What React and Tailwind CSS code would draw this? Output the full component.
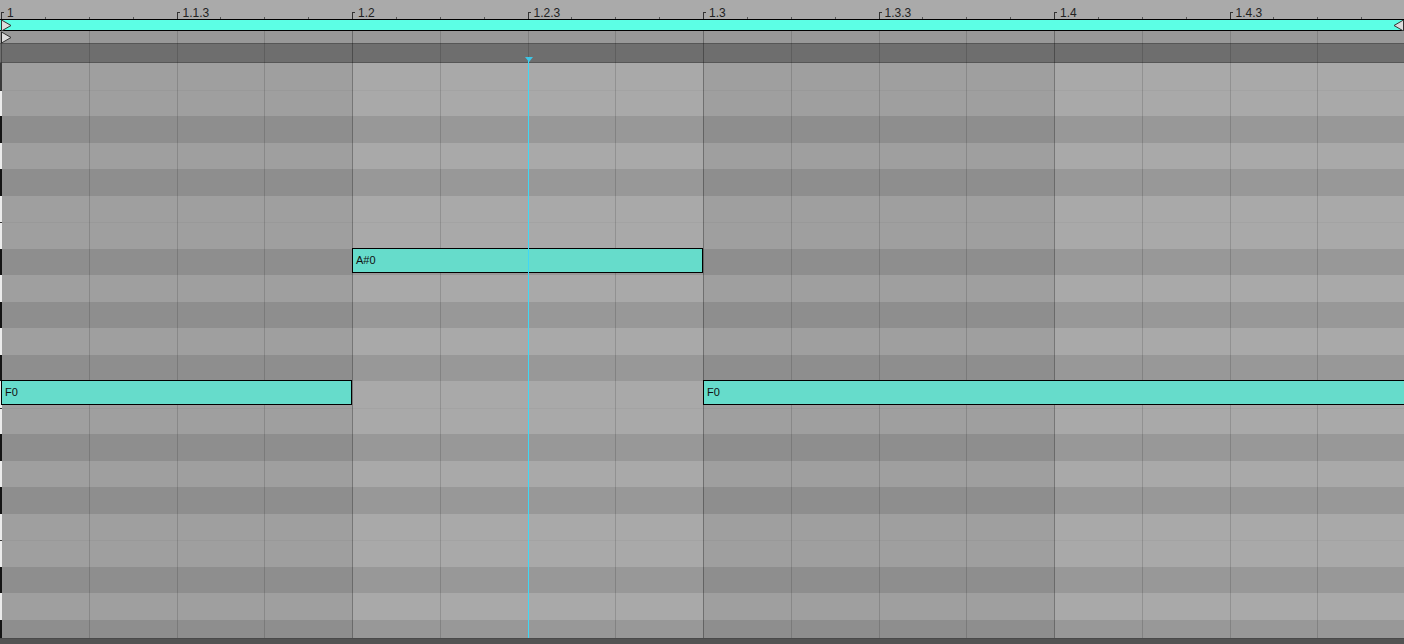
import React from "react";

const labels = ["1", "1.1.3", "1.2", "1.2.3", "1.3", "1.3.3", "1.4", "1.4.3"];
const ROWS = 22;
const isBlack = (r) => {
  const n = (((17 - r) % 12) + 12) % 12;
  return [1, 3, 6, 8, 10].includes(n);
};
const isEorB = (r) => {
  const n = (((17 - r) % 12) + 12) % 12;
  return n === 4 || n === 11;
};
const cellCls = (black, light) =>
  black
    ? light
      ? "bg-[#989898]"
      : "bg-[#8e8e8e]"
    : light
    ? "bg-[#a9a9a9]"
    : "bg-[#9f9f9f]";

function RulerCell({ label }) {
  return (
    <div className="relative h-full w-[175.5px] shrink-0">
      <div className="absolute left-0 top-[12px] h-[7px] w-px bg-[#333]" />
      <div className="absolute left-0 top-[12px] h-px w-[3px] bg-[#333]" />
      <div className="absolute left-[6px] top-[7px] text-[12px] leading-[12px] text-[#222] whitespace-nowrap">
        {label}
      </div>
      <div className="absolute left-[43.875px] top-[17px] h-[2px] w-px bg-[#555]" />
      <div className="absolute left-[87.75px] top-[17px] h-[2px] w-px bg-[#555]" />
      <div className="absolute left-[131.625px] top-[17px] h-[2px] w-px bg-[#555]" />
    </div>
  );
}

function TriRight() {
  return (
    <svg width="11" height="11" viewBox="0 0 11 11" className="shrink-0">
      <polygon points="0.5,0 10,5.5 0.5,11" fill="#dcdcdc" stroke="#333" strokeWidth="1" />
    </svg>
  );
}
function TriLeft() {
  return (
    <svg width="11" height="11" viewBox="0 0 11 11" className="shrink-0">
      <polygon points="10.5,0 1,5.5 10.5,11" fill="#dcdcdc" stroke="#333" strokeWidth="1" />
    </svg>
  );
}

function Note({ left, top, width, label }) {
  return (
    <div
      className="absolute z-[2] h-[25px] border border-black bg-[#66dccb] flex items-center pl-[3px] text-[11px] text-[#111]"
      style={{ left, top, width }}
    >
      {label}
    </div>
  );
}

export default function App() {
  const cols = Array.from({ length: 16 }, (_, i) => i);
  const rows = Array.from({ length: ROWS }, (_, i) => i);
  return (
    <div className="relative w-[1404px] h-[644px] overflow-hidden bg-[#aaaaaa] font-['Liberation_Sans',Arial,sans-serif] flex flex-col">
      {/* vertical grid lines */}
      <div className="pointer-events-none absolute z-[1] left-0 top-[31px] h-[613px] w-full flex pl-[1px]">
        {cols.map((c) => (
          <div
            key={c}
            className={
              c % 4 === 0
                ? "h-full w-[87.75px] shrink-0 border-l border-[rgba(0,0,0,0.3)]"
                : "h-full w-[87.75px] shrink-0 border-l border-[rgba(0,0,0,0.14)]"
            }
          />
        ))}
      </div>

      {/* ruler labels */}
      <div className="h-[19px] shrink-0 flex pl-[1px]">
        {labels.map((l) => (
          <RulerCell key={l} label={l} />
        ))}
      </div>

      {/* loop bar */}
      <div className="h-[12px] shrink-0 border-y border-black bg-[#5cffe5] flex items-center justify-between pl-[1px]">
        <TriRight />
        <TriLeft />
      </div>

      {/* second strip */}
      <div className="h-[12px] shrink-0 bg-[#989898] flex items-center pl-[1px]">
        <TriRight />
      </div>

      {/* dark band */}
      <div className="h-[20px] shrink-0 bg-[#6e6e6e] border-y border-[#565656]" />

      {/* note grid */}
      <div className="relative h-[575px] shrink-0 overflow-hidden">
        <div className="flex flex-col">
          {rows.map((r) => {
            const b = isBlack(r);
            const sep = isEorB(r);
            return (
              <div key={r} className="flex h-[26.5px] shrink-0">
                {[0, 1, 2, 3].map((beat) => (
                  <div
                    key={beat}
                    className={
                      (beat === 0 ? "w-[352px] " : "w-[351px] ") +
                      "h-full shrink-0 " +
                      cellCls(b, beat % 2 === 1) +
                      (sep ? " border-t border-[rgba(0,0,0,0.035)]" : "")
                    }
                  />
                ))}
              </div>
            );
          })}
        </div>

        {/* left key strip */}
        <div className="absolute z-[2] left-0 top-0 w-[2px] flex flex-col">
          {rows.map((r) => (
            <div
              key={r}
              className={
                "h-[26.5px] w-full shrink-0 " +
                (r === 0
                  ? "bg-[#3a3a3a]"
                  : isBlack(r)
                  ? "bg-[#141414]"
                  : isEorB(r)
                  ? "bg-[#ececec] border-t border-[#333]"
                  : "bg-[#ececec]")
              }
            />
          ))}
        </div>

        <Note left={352} top={185} width={351} label="A#0" />
        <Note left={1} top={317} width={351} label="F0" />
        <Note left={703} top={317} width={720} label="F0" />
      </div>

      {/* bottom bar */}
      <div className="relative z-[2] h-[6px] shrink-0 bg-[#535353] border-t border-[#4a4a4a]" />

      {/* playhead */}
      <svg
        className="absolute z-[3] left-[524.5px] top-[57px]"
        width="8"
        height="5"
        viewBox="0 0 8 5"
      >
        <polygon points="0,0 8,0 4,5" fill="#3fc6e6" />
      </svg>
      <div className="absolute z-[3] left-[528px] top-[61px] w-px h-[577px] bg-[#3fd8f5]" />
    </div>
  );
}
